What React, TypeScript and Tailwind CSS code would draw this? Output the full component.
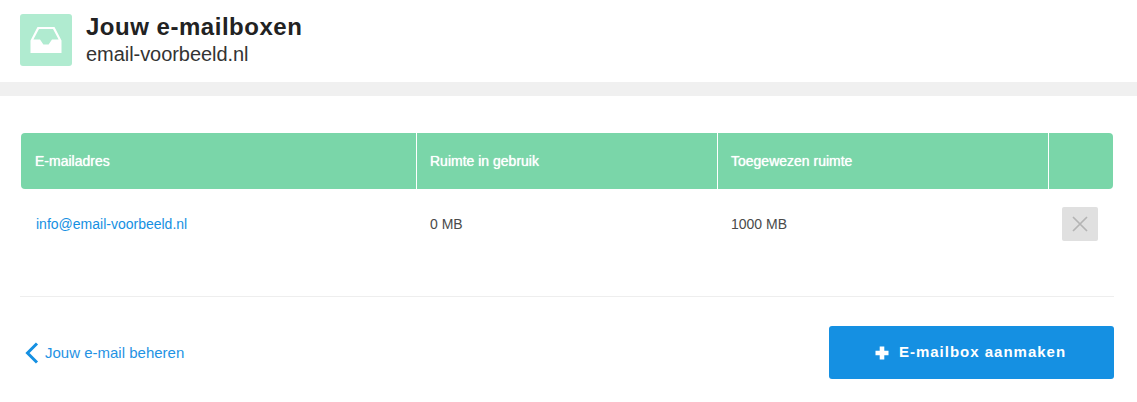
import React from "react";

function InboxIcon() {
  return (
    <svg width="32" height="28" viewBox="0 0 32 28" fill="none" aria-hidden="true">
      <path fillRule="evenodd" clipRule="evenodd" fill="#ffffff" d="M7.5 1h17L31.5 14.5V27H.5V14.5L7.5 1ZM9 3 3.4 13.6H10L13.4 18.6h5.2L22 13.6h6.6L23 3H9Z" />
    </svg>
  );
}

export default function App() {
  return (
    <div className="w-[1137px] h-[402px] bg-white overflow-hidden font-['Liberation_Sans',Arial,sans-serif]">
      <header className="h-[82px] pl-5 pt-[14px] flex items-start gap-[14px]">
        <div className="w-[52px] h-[52px] rounded-[3px] bg-[#b0ebd0] flex items-center justify-center">
          <InboxIcon />
        </div>
        <div className="flex flex-col -mt-[1px]">
          <h1 className="text-[24px] leading-[28px] font-bold text-[#222222] tracking-[0.52px]">Jouw e-mailboxen</h1>
          <p className="text-[20px] leading-[26px] text-[#333333] tracking-[-0.05px]">email-voorbeeld.nl</p>
        </div>
      </header>
      <div className="h-[14px] bg-[#f0f0f0]" />
      <main className="pl-5 pt-[37px]">
        <div className="ml-px w-[1092px] h-[56px] rounded-[4px] bg-[#7ad6a9] grid grid-cols-[396px_301px_331px_64px] items-stretch text-[14px] font-normal text-white [text-shadow:0_0_1px_#ffffff]">
          <div className="pl-[14px] flex items-center border-r border-white">E-mailadres</div>
          <div className="pl-[13px] flex items-center border-r border-white">Ruimte in gebruik</div>
          <div className="pl-[13px] flex items-center border-r border-white">Toegewezen ruimte</div>
          <div />
        </div>
        <div className="ml-px w-[1092px] h-[70px] grid grid-cols-[396px_301px_331px_64px] items-center text-[14px] text-[#4a4a4a]">
          <a className="pl-[15px] text-[#1590e2]">info@email-voorbeeld.nl</a>
          <div className="pl-[13px]">0 MB</div>
          <div className="pl-[13px]">1000 MB</div>
          <div className="pl-[13px]">
            <button className="w-9 h-[34px] rounded-[2px] bg-[#e0e0e0] flex items-center justify-center">
              <svg width="16" height="16" viewBox="0 0 16 16" aria-hidden="true">
                <path d="M1 1 15 15M15 1 1 15" stroke="#b4b4b4" strokeWidth="1.7" fill="none" />
              </svg>
            </button>
          </div>
        </div>
        <div className="mt-[37px] w-[1094px] border-t border-[#eeeeee]" />
        <div className="mt-[29px] w-[1094px] flex items-center justify-between">
          <a className="flex items-center pl-[5px] text-[15px] leading-[24px] text-[#1f93e4] gap-[6px]">
            <svg width="14" height="22" viewBox="0 0 14 22" aria-hidden="true">
              <path d="M12 1.5 2.5 11 12 20.5" stroke="#1590e2" strokeWidth="3" fill="none" />
            </svg>
            <span className="mt-[1px]">Jouw e-mail beheren</span>
          </a>
          <button className="w-[285px] h-[53px] rounded-[3px] bg-[#1590e2] text-white text-[15px] font-bold tracking-[1px] flex items-center justify-center gap-[10px] pr-[2px]">
            <svg width="14" height="14" viewBox="0 0 14 14" aria-hidden="true">
              <path d="M4.7 .5h4.6v4.2h4.2v4.6H9.3v4.2H4.7V9.300H.5V4.700h4.200Z" fill="#ffffff" />
            </svg>
            E-mailbox aanmaken
          </button>
        </div>
      </main>
    </div>
  );
}
